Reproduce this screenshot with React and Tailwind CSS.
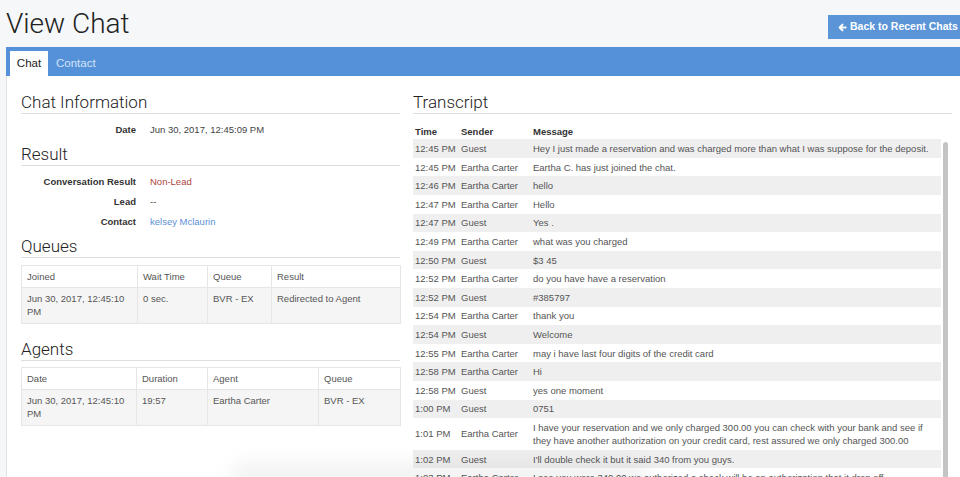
import React from "react";

const rows = [
  ["12:45 PM", "Guest", "Hey I just made a reservation and was charged more than what I was suppose for the deposit."],
  ["12:45 PM", "Eartha Carter", "Eartha C. has just joined the chat."],
  ["12:46 PM", "Eartha Carter", "hello"],
  ["12:47 PM", "Eartha Carter", "Hello"],
  ["12:47 PM", "Guest", "Yes ."],
  ["12:49 PM", "Eartha Carter", "what was you charged"],
  ["12:50 PM", "Guest", "$3 45"],
  ["12:52 PM", "Eartha Carter", "do you have have a reservation"],
  ["12:52 PM", "Guest", "#385797"],
  ["12:54 PM", "Eartha Carter", "thank you"],
  ["12:54 PM", "Guest", "Welcome"],
  ["12:55 PM", "Eartha Carter", "may i have last four digits of the credit card"],
  ["12:58 PM", "Eartha Carter", "Hi"],
  ["12:58 PM", "Guest", "yes one moment"],
  ["1:00 PM", "Guest", "0751"],
  ["1:01 PM", "Eartha Carter", "two"],
  ["1:02 PM", "Guest", "I'll double check it but it said 340 from you guys."],
  ["1:03 PM", "Eartha Carter", "I see you were 340.00 we authorized a check will be an authorization that it drop off"],
];

function Heading({ children, className = "" }) {
  return (
    <div
      className={`text-[17px] leading-[20px] pb-[1px] border-b border-[#dedede] text-[#222] font-light ${className}`}
      style={{ fontFamily: "Roboto, 'Liberation Sans', sans-serif" }}
    >
      {children}
    </div>
  );
}

function InfoRow({ label, children }) {
  return (
    <div className="flex items-center h-[20px]">
      <div className="w-[115px] text-right font-bold text-[#333]">{label}</div>
      <div className="ml-[14px]">{children}</div>
    </div>
  );
}

function SmallTable({ cols, widths, cells }) {
  return (
    <table className="table-fixed border-collapse w-[379px] text-[#555]">
      <colgroup>
        {widths.map((w, i) => (
          <col key={i} style={{ width: w }} />
        ))}
      </colgroup>
      <thead>
        <tr className="bg-white">
          {cols.map((c, i) => (
            <th key={i} className="border border-[#e6e6e6] text-left font-normal px-[5px] py-[4.5px] leading-[12px] align-top">
              {c}
            </th>
          ))}
        </tr>
      </thead>
      <tbody>
        <tr className="bg-[#f5f5f5]">
          {cells.map((c, i) => (
            <td key={i} className="border border-[#e6e6e6] px-[5px] py-[5px] leading-[12.5px] align-top">
              {c}
            </td>
          ))}
        </tr>
      </tbody>
    </table>
  );
}

export default function App() {
  return (
    <div
      className="relative w-[960px] h-[477px] overflow-hidden bg-[#f6f7f8] text-[9.5px]"
      style={{ fontFamily: "'Liberation Sans', Arial, sans-serif" }}
    >
      {/* Header */}
      <div className="flex justify-between items-start h-[47px]">
        <div
          className="pl-[6px] pt-[8px] text-[28px] leading-[32px] font-light text-[#222]"
          style={{ fontFamily: "Roboto, 'Liberation Sans', sans-serif" }}
        >
          View Chat
        </div>
        <div className="mt-[15px] h-[24px] w-[132px] bg-[#5b95d8] text-white font-bold text-[10.5px] flex items-center pl-[10px] gap-[3px]">
          <svg width="9" height="9" viewBox="0 0 10 10" fill="none" stroke="white" strokeWidth="2.2" strokeLinecap="round" strokeLinejoin="round">
            <path d="M8.5 5H2M5 1.8L1.8 5L5 8.2" />
          </svg>
          <span>Back to Recent Chats</span>
        </div>
      </div>

      {/* Tab bar */}
      <div className="ml-[6px] h-[29px] bg-[#5591d8] flex items-end pl-[4px]">
        <div className="h-[25px] w-[38px] bg-white flex items-center justify-center text-[11.5px] text-[#222]">
          Chat
        </div>
        <div className="h-[25px] flex items-center ml-[8px] text-[11.5px] text-[#d3e3f7]">Contact</div>
      </div>

      {/* Content */}
      <div className="ml-[6px] bg-white border-l border-[#e2e2e2] h-[401px] flex pl-[14px] pt-[16px]">
        {/* Left column */}
        <div className="w-[379px] flex flex-col">
          <Heading>Chat Information</Heading>
          <div className="mt-[6px]">
            <InfoRow label="Date">
              <span className="text-[#444]">Jun 30, 2017, 12:45:09 PM</span>
            </InfoRow>
          </div>
          <Heading className="mt-[4px]">Result</Heading>
          <div className="mt-[6px]">
            <InfoRow label="Conversation Result">
              <span className="text-[#ad4540]">Non-Lead</span>
            </InfoRow>
            <InfoRow label="Lead">
              <span className="text-[#444]">--</span>
            </InfoRow>
            <InfoRow label="Contact">
              <span className="text-[#5b8fd6]">kelsey Mclaurin</span>
            </InfoRow>
          </div>
          <Heading className="mt-[4px]">Queues</Heading>
          <div className="mt-[7px]">
            <SmallTable
              cols={["Joined", "Wait Time", "Queue", "Result"]}
              widths={["116px", "70px", "64px", "129px"]}
              cells={["Jun 30, 2017, 12:45:10 PM", "0 sec.", "BVR - EX", "Redirected to Agent"]}
            />
          </div>
          <Heading className="mt-[15px]">Agents</Heading>
          <div className="mt-[6px]">
            <SmallTable
              cols={["Date", "Duration", "Agent", "Queue"]}
              widths={["115px", "71px", "111px", "82px"]}
              cells={["Jun 30, 2017, 12:45:10 PM", "19:57", "Eartha Carter", "BVR - EX"]}
            />
          </div>
        </div>

        {/* Right column */}
        <div className="ml-[13px] w-[539px] flex flex-col">
          <Heading>Transcript</Heading>
          <div className="flex mt-[11px] h-[20px] items-center font-bold text-[#333]">
            <div className="w-[46px] pl-[2px]">Time</div>
            <div className="w-[72px] pl-[2px]">Sender</div>
            <div className="pl-[2px]">Message</div>
          </div>
          <div className="flex">
            <div className="w-[528px] text-[#555]">
              {rows.map((r, i) => (
                <div key={i} className={`flex items-center py-[2.8px] leading-[13px] ${i % 2 === 0 ? "bg-[#efeff0]" : "bg-white"}`}>
                  <div className="w-[46px] pl-[2px] shrink-0">{r[0]}</div>
                  <div className="w-[72px] pl-[2px] shrink-0">{r[1]}</div>
                  <div className="pl-[2px] whitespace-nowrap">
                    {r[2] === "two" ? (
                      <>
                        I have your reservation and we only charged 300.00 you can check with your bank and see if
                        <br />
                        they have another authorization on your credit card, rest assured we only charged 300.00
                      </>
                    ) : (
                      r[2]
                    )}
                  </div>
                </div>
              ))}
            </div>
            <div className="w-[11px] pt-[3px] pl-[2px]">
              <div className="w-[5px] h-[340px] rounded-full bg-[#c4c4c4]" />
            </div>
          </div>
        </div>
      </div>

      {/* faint window shadow at bottom */}
      <div className="absolute left-[230px] bottom-[-14px] w-[420px] h-[28px] rounded-full bg-black/5 blur-[10px] pointer-events-none" />
    </div>
  );
}
